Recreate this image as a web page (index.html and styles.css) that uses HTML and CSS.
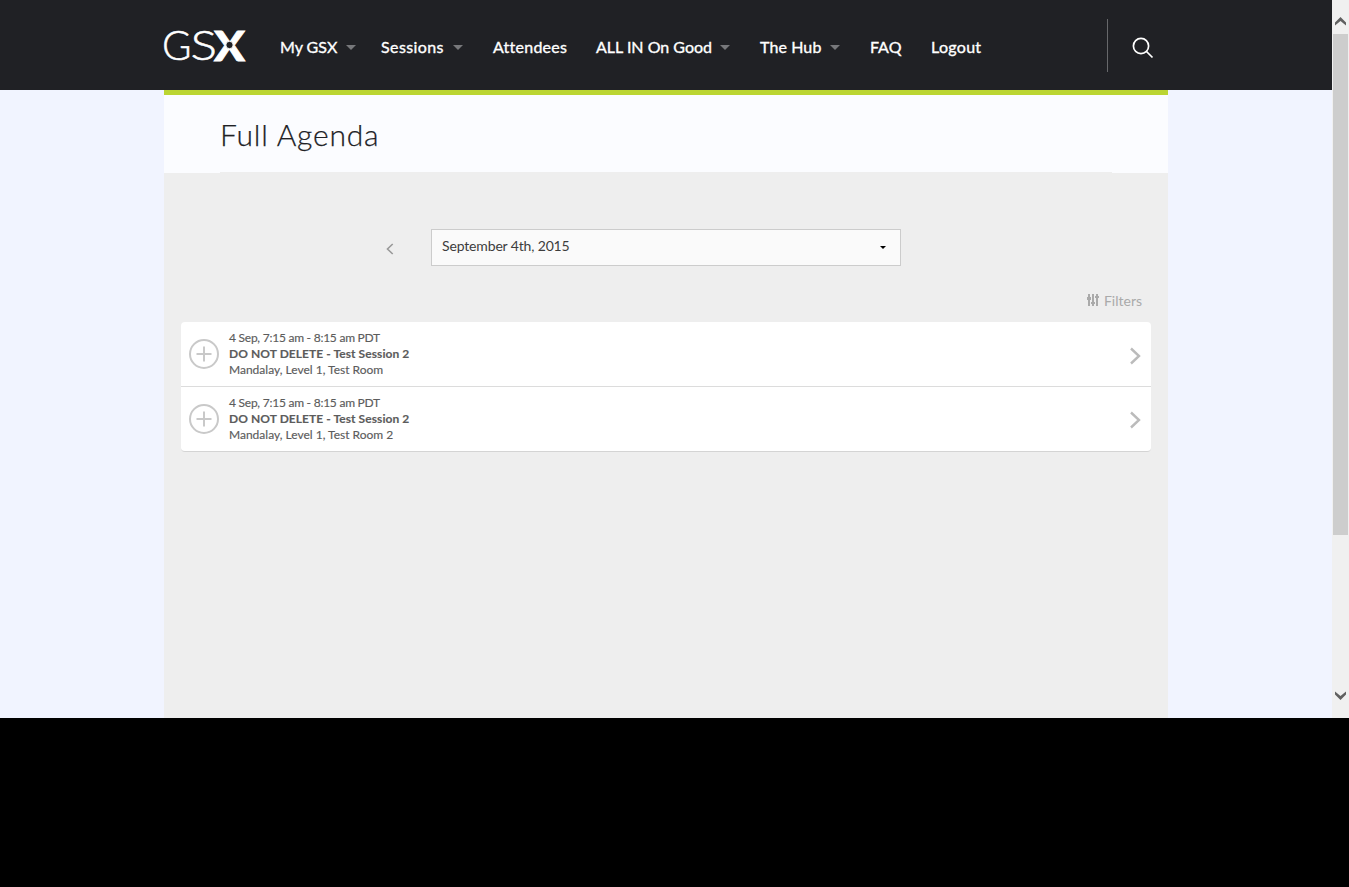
FILE: index.html
```html
<!DOCTYPE html>
<html lang="en">
<head>
<meta charset="utf-8">
<title>Full Agenda</title>
<link rel="stylesheet" href="styles.css">
</head>
<body>
<div class="window">
  <div class="viewport">
    <header class="topbar">
      <div class="inner">
        <svg class="logo" width="82" height="32" viewBox="0 0 82 32">
          <text class="logo-thin" x="-2" y="29.3" textLength="29.5" lengthAdjust="spacingAndGlyphs">G</text>
          <text class="logo-thin" x="26.5" y="29.3" textLength="26.5" lengthAdjust="spacingAndGlyphs">S</text>
          <text class="logo-bold" x="50" y="29.5" textLength="31" lengthAdjust="spacingAndGlyphs">X</text>
          <circle class="logo-dot" cx="65.5" cy="14" r="3.7"/>
        </svg>
        <nav class="nav">
          <a class="item my"><span>My GSX</span><i class="caret"></i></a>
          <a class="item sessions"><span>Sessions</span><i class="caret"></i></a>
          <a class="item attendees"><span>Attendees</span></a>
          <a class="item allin"><span>ALL IN On Good</span><i class="caret"></i></a>
          <a class="item hub"><span>The Hub</span><i class="caret"></i></a>
          <a class="item faq"><span>FAQ</span></a>
          <a class="item logout"><span>Logout</span></a>
        </nav>
        <div class="search">
          <svg width="22" height="22" viewBox="0 0 22 22"><circle cx="9" cy="9" r="7.6"/><path d="M14.5 14.5L20.5 20.5"/></svg>
        </div>
      </div>
    </header>
    <main class="page">
      <div class="heading"><h1>Full Agenda</h1></div>
      <div class="daypicker">
        <svg class="prev" width="8" height="12" viewBox="0 0 8 12"><path d="M6.7 1L1.5 6L6.7 11"/></svg>
        <div class="select"><span>September 4th, 2015</span><i class="arrow"></i></div>
      </div>
      <div class="filters">
        <svg width="12" height="12" viewBox="0 0 12 12"><path d="M1 0h2v3h1v3H3v6H1V6H0V3h1zM5 0h2v8h1v2H7v2H5v-2H4V8h1zM9 0h2v2h1v2h-1v8H9V4H8V2h1z"/></svg>
        <span>Filters</span>
      </div>
      <ul class="list">
        <li class="row">
          <svg class="add" width="30" height="30" viewBox="0 0 30 30"><circle cx="15" cy="15" r="14"/><path d="M15 7.5v15M7.5 15h15"/></svg>
          <div class="info">
            <div class="time">4 Sep, 7:15 am - 8:15 am PDT</div>
            <div class="name">DO NOT DELETE - Test Session 2</div>
            <div class="place">Mandalay, Level 1, Test Room</div>
          </div>
          <svg class="next" width="12" height="18" viewBox="0 0 12 18"><path d="M2 1.5L10 9L2 16.5"/></svg>
        </li>
        <li class="row">
          <svg class="add" width="30" height="30" viewBox="0 0 30 30"><circle cx="15" cy="15" r="14"/><path d="M15 7.5v15M7.5 15h15"/></svg>
          <div class="info">
            <div class="time">4 Sep, 7:15 am - 8:15 am PDT</div>
            <div class="name">DO NOT DELETE - Test Session 2</div>
            <div class="place">Mandalay, Level 1, Test Room 2</div>
          </div>
          <svg class="next" width="12" height="18" viewBox="0 0 12 18"><path d="M2 1.5L10 9L2 16.5"/></svg>
        </li>
      </ul>
    </main>
  </div>
  <div class="scrollbar">
    <svg width="11" height="8" viewBox="0 0 11 8"><path d="M0 5.5L5.5 0L11 5.5V8.5L5.5 4L0 8.5z"/></svg>
    <div class="thumb"></div>
    <svg class="down" width="11" height="8" viewBox="0 0 11 8"><path d="M0 2.5L5.5 8L11 2.5V-.5L5.5 4L0-.5z"/></svg>
  </div>
</div>
</body>
</html>
```
FILE: styles.css
```css
* { box-sizing: border-box; }
body { margin: 0; height: 887px; background: #000; overflow: hidden; font-family: Lato, "Open Sans", sans-serif; }
.window { display: flex; height: 718px; }
.viewport { width: 1332px; background: #f1f4ff; display: flex; flex-direction: column; }
.topbar { height: 90px; background: #202125; flex: none; }
.inner { width: 1004px; height: 90px; margin: 0 auto; display: flex; }
.logo { margin-top: 31px; overflow: visible; flex: none; }
.logo text { fill: #fff; }
.logo-thin { font-family: Lato, sans-serif; font-weight: 300; font-size: 40.5px; stroke: #fff; stroke-width: .5px; }
.logo-bold { font-family: Lato, sans-serif; font-weight: 900; font-size: 41px; stroke: #fff; stroke-width: .8px; }
.logo-dot { fill: #202125; stroke: #fff; stroke-width: 1; }
.nav { display: flex; margin-left: 34px; width: 827px; height: 95px; align-items: center; }
.item { display: flex; align-items: center; color: #fff; font-size: 16px; font-weight: 400; line-height: 20px; white-space: nowrap; flex: none; -webkit-text-stroke: .35px #fff; }
.item span { margin-top: -1px; }
.my { width: 101px; }
.sessions { width: 112px; letter-spacing: .4px; }
.attendees { width: 103px; letter-spacing: .25px; }
.allin { width: 164px; }
.hub { width: 110px; letter-spacing: .1px; }
.faq { width: 61px; }
.logout { letter-spacing: .3px; }
.caret { width: 0; border: 5px solid transparent; border-top-color: #77787b; border-bottom: 0; margin-left: auto; margin-right: 25px; }
.sessions .caret, .allin .caret, .hub .caret { margin-right: 30px; }
.search { height: 53px; margin-top: 19px; border-left: 1px solid #67686b; padding: 18px 0 0 24px; }
.search svg { display: block; }
.search svg, .prev, .add, .next { fill: none; stroke: #fff; stroke-width: 1.7; flex: none; }
.page { width: 1004px; flex: 1; margin: 0 auto; border-top: 5px solid #bbd532; background: #eee; }
.heading { height: 78px; background: #fbfcff; padding: 0 56px; }
h1 { margin: 0; height: 78px; border-bottom: 1px solid #eee; font-weight: 300; font-size: 30px; line-height: 78px; color: #202125; letter-spacing: .8px; -webkit-text-stroke: .25px #202125; }
.daypicker { display: flex; margin-top: 56px; padding-left: 222px; height: 37px; align-items: center; }
.prev { stroke: #999; stroke-width: 1.6; margin-top: 2px; }
.select { width: 470px; height: 37px; margin-left: 37px; border: 1px solid #ccc; background: #fafafa; padding: 0 14px 2px 10px; display: flex; align-items: center; justify-content: space-between; font-size: 14px; letter-spacing: -.15px; color: #3d3d3d; }
.select span { margin-top: -2px; }
.arrow { width: 0; border: 3px solid transparent; border-top-color: #000; border-bottom: 0; margin-top: 2px; }
.filters { display: flex; justify-content: flex-end; align-items: center; gap: 5px; height: 20px; margin-top: 25px; padding-right: 26px; font-size: 14px; color: #aaa; }
.filters svg { fill: #aaa; margin-top: -2px; }
.filters span { margin-top: -2px; }
.list { list-style: none; margin: 11px 17px 0; padding: 0; background: #fff; border-radius: 4px; border-bottom: 1px solid #d4d4d4; }
.row { display: flex; height: 64px; padding: 0 10px 0 8px; align-items: center; }
.row + .row { border-top: 1px solid #dcdcdc; height: 65px; }
.add { stroke: #c9c9c9; stroke-width: 2; }
.info { margin-left: 10px; flex: 1; font-size: 12px; line-height: 16px; color: #5c5c5c; -webkit-text-stroke: .15px #5c5c5c; }
.time { letter-spacing: -.24px; }
.name { font-weight: 700; letter-spacing: .07px; }
.next { stroke: #bbb; stroke-width: 2.4; margin-top: 4px; }
.row + .row .next { margin-top: 2px; }
.scrollbar { width: 17px; background: #f0f0f0; display: flex; flex-direction: column; align-items: center; padding: 17px 0 18px; }
.scrollbar svg { fill: #606060; flex: none; overflow: visible; }
.thumb { width: 15px; height: 501px; margin-top: 9px; background: #cdcdcd; }
.down { margin-top: auto; }
```
